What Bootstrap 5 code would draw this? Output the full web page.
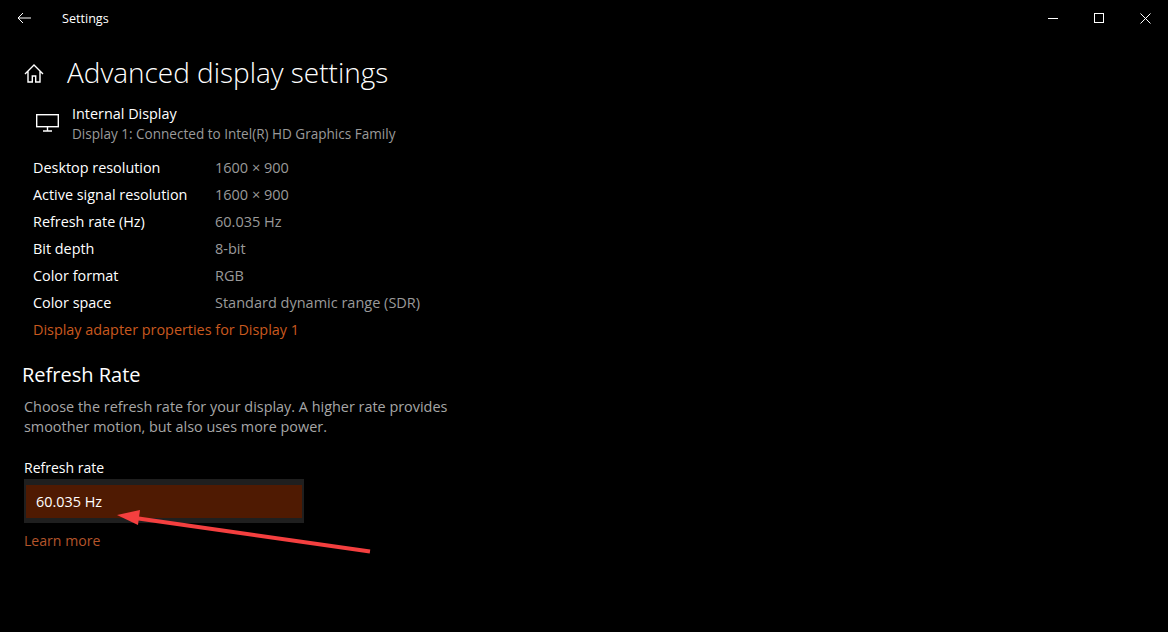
<!DOCTYPE html>
<html lang="en"><head><meta charset="utf-8"><title>Settings</title>
<link href="https://cdn.jsdelivr.net/npm/bootstrap@5.3.0/dist/css/bootstrap.min.css" rel="stylesheet">
<style>
html,body{height:632px;overflow:hidden;background:#000;color:#fff;font-family:"Open Sans","Noto Sans","Liberation Sans",sans-serif;font-size:14.4px;line-height:20px}
.page{position:relative;width:1168px;height:632px}
.tbar{height:36px;padding-left:17px}
.ttl{font-size:12.6px;margin-left:31px;padding-top:1px}
.wbtn{width:46px;height:36px;display:flex;align-items:center;justify-content:center}
.hd{height:56px;padding-left:24px;margin-top:8px}
.hd h1{font-size:27.950px;font-weight:300;margin:0 0 0 23px;line-height:40px}
.hico{margin-top:2px}
.dev{padding-left:36px;height:40px;margin-top:4px}
.dev-t{margin-left:13px}
.dim{color:#9a9a9a;font-size:14.500px}
.dev-s{font-size:13.550px;line-height:20px}
.info{padding-left:33px;margin-top:10px}
.irow{height:27px;display:flex;align-items:center}
.ilab{width:182px}
.acc{color:#c9591f}
.h2x{font-size:20px;font-weight:400;margin:17px 0 0 22px;line-height:30px}
.desc{margin:7px 0 0 24px;width:440px;color:#a6a6a6;font-size:14.420px;line-height:20px}
.lab{margin:21px 0 0 24px;font-size:14px}
.sel{margin:1px 0 0 24px;width:280px;height:44px;background:#4f1a02;border:solid #1f1f1f;border-width:6px 2px 5px;padding-left:10px;display:flex;align-items:center}
.lm{margin:8px 0 0 24px;color:#b4552b;font-size:14.100px}
.arrow{position:absolute;left:0;top:0}
</style></head><body>
<div class="page">
<div class="tbar d-flex align-items-center justify-content-between">
<div class="d-flex align-items-center">
<svg width="14" height="12" viewBox="0 0 14 12" fill="none" stroke="#fff"><path d="M14 6H1M6 1 1 6l5 5"/></svg>
<span class="ttl">Settings</span></div>
<div class="d-flex">
<div class="wbtn"><svg width="10" height="10"><path d="M0 5.5h10" stroke="#fff"/></svg></div>
<div class="wbtn"><svg width="10" height="10"><rect x=".5" y=".5" width="9" height="9" fill="none" stroke="#fff"/></svg></div>
<div class="wbtn"><svg width="11" height="11"><path d="M.5.5l10 10M10.5.5l-10 10" stroke="#fff"/></svg></div>
</div></div>
<div class="hd d-flex align-items-center">
<svg class="hico" width="20" height="19" viewBox="0 0 20 19" fill="none" stroke="#fff" stroke-width="1.4"><path d="M1 10 10 1l9 9M4 7.5V18h4.300v-6h3.400v6H16V7.500"/></svg>
<h1>Advanced display settings</h1></div>
<div class="dev d-flex">
<svg width="23" height="40" viewBox="0 0 23 40" fill="none" stroke="#fff" stroke-width="1.4"><rect x=".7" y="10.700" width="21.600" height="12"/><path d="M11.500 23v3.500M7 27h9"/></svg>
<div class="dev-t"><div>Internal Display</div><div class="dim dev-s">Display 1: Connected to Intel(R) HD Graphics Family</div></div></div>
<div class="info">
<div class="irow"><span class="ilab">Desktop resolution</span><span class="dim">1600 × 900</span></div>
<div class="irow"><span class="ilab">Active signal resolution</span><span class="dim">1600 × 900</span></div>
<div class="irow"><span class="ilab">Refresh rate (Hz)</span><span class="dim">60.035 Hz</span></div>
<div class="irow"><span class="ilab">Bit depth</span><span class="dim">8-bit</span></div>
<div class="irow"><span class="ilab">Color format</span><span class="dim">RGB</span></div>
<div class="irow"><span class="ilab">Color space</span><span class="dim">Standard dynamic range (SDR)</span></div>
<div class="irow acc">Display adapter properties for Display 1</div>
</div>
<h2 class="h2x">Refresh Rate</h2>
<p class="desc">Choose the refresh rate for your display. A higher rate provides smoother motion, but also uses more power.</p>
<div class="lab">Refresh rate</div>
<div class="sel">60.035 Hz</div>
<div class="lm">Learn more</div>
<svg class="arrow" width="1168" height="632"><path d="M370 551.500 135 518" stroke="#f43f3f" stroke-width="4"/><path d="M117 515 140 510 138 525Z" fill="#f43f3f"/></svg>
</div>
<script src="https://cdn.jsdelivr.net/npm/bootstrap@5.3.0/dist/js/bootstrap.bundle.min.js"></script>
</body></html>
